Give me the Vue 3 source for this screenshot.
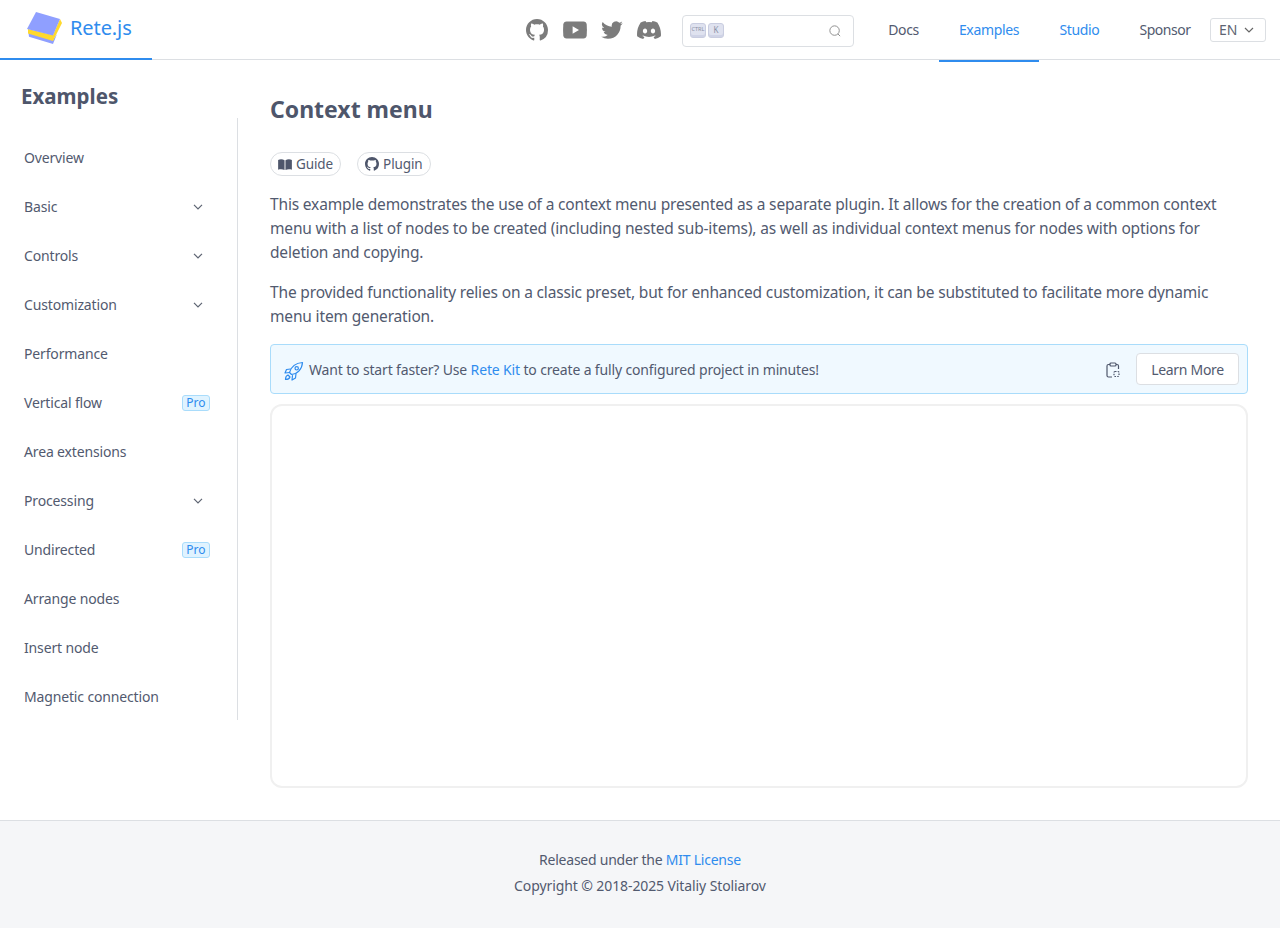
<script setup>
const menu = [
  { label: 'Overview' },
  { label: 'Basic', caret: true },
  { label: 'Controls', caret: true },
  { label: 'Customization', caret: true },
  { label: 'Performance' },
  { label: 'Vertical flow', pro: true },
  { label: 'Area extensions' },
  { label: 'Processing', caret: true },
  { label: 'Undirected', pro: true },
  { label: 'Arrange nodes' },
  { label: 'Insert node' },
  { label: 'Magnetic connection' }
]
</script>

<template>
  <div class="page">
    <header class="topbar">
      <a class="brand">
        <svg class="logo" width="36" height="35" viewBox="0 0 36 35">
          <path d="M1.500 23 L26 30 L30 24 L26 34 L2 26.800 Z" fill="#8f9fff" />
          <path d="M1 19 L26 25 L33 9 L35 13 L26 31 L1 23.500 Z" fill="#ffd92c" />
          <path d="M9 2 L33 9 L26 25.500 L0 19 Z" fill="#8f9fff" />
        </svg>
        <span class="brand-name">Rete.js</span>
      </a>
      <div class="top-right">
        <div class="socials">
          <svg class="gh" width="22" height="22" viewBox="0 0 16 16" fill="#7c7c7c"><path d="M8 0C3.58 0 0 3.58 0 8c0 3.54 2.29 6.53 5.47 7.59.4.07.55-.17.55-.38 0-.19-.01-.82-.01-1.49-2.01.37-2.53-.49-2.69-.94-.09-.23-.48-.94-.82-1.13-.28-.15-.68-.52-.01-.53.63-.01 1.08.58 1.23.82.72 1.21 1.87.87 2.33.66.07-.52.28-.87.51-1.07-1.78-.2-3.64-.89-3.64-3.95 0-.87.31-1.59.82-2.15-.08-.2-.36-1.02.08-2.12 0 0 .67-.21 2.2.82.64-.18 1.32-.27 2-.27s1.36.09 2 .27c1.53-1.04 2.2-.82 2.2-.82.44 1.1.16 1.92.08 2.12.51.56.82 1.27.82 2.15 0 3.07-1.87 3.75-3.65 3.95.29.25.54.73.54 1.48 0 1.07-.01 1.93-.01 2.2 0 .21.15.46.55.38A8.01 8.01 0 0 0 16 8c0-4.42-3.58-8-8-8z"/></svg>
          <svg width="24" height="18" viewBox="0 0 24 18"><path d="M3.500 0.500h17c1.700 0 3 1.300 3.200 3 .3 3.600.3 7.400 0 11-.2 1.700-1.500 3-3.200 3h-17c-1.700 0-3-1.300-3.200-3-.3-3.600-.3-7.400 0-11 .2-1.700 1.500-3 3.200-3z" fill="#7c7c7c"/><path d="M9.600 5.300 16 9l-6.400 3.700z" fill="#fff"/></svg>
          <svg width="22" height="18" viewBox="0 0 24 20" fill="#7c7c7c"><path d="M23.950 2.570a10 10 0 0 1-2.820.77A4.960 4.960 0 0 0 23.300.63a9.900 9.900 0 0 1-3.130 1.190 4.920 4.920 0 0 0-8.380 4.480A13.980 13.980 0 0 1 1.640 1.160a4.930 4.930 0 0 0 1.520 6.570 4.900 4.900 0 0 1-2.230-.62v.06a4.920 4.920 0 0 0 3.950 4.830 4.900 4.900 0 0 1-2.210.08 4.940 4.940 0 0 0 4.600 3.420A9.870 9.870 0 0 1 0 17.540 13.940 13.940 0 0 0 7.550 19.750c9.050 0 14-7.500 14-13.980 0-.21 0-.42-.02-.63a10 10 0 0 0 2.420-2.570z"/></svg>
          <svg width="24" height="18" viewBox="0 0 24 18" fill="#7c7c7c"><path d="M20.320 1.500A19.800 19.800 0 0 0 15.400 0c-.2.38-.45.88-.62 1.280a18.400 18.400 0 0 0-5.550 0C9.050.88 8.800.38 8.600 0a19.700 19.700 0 0 0-4.930 1.500C.55 6.170-.3 10.720.12 15.200A19.900 19.900 0 0 0 6.180 18c.49-.66.92-1.360 1.300-2.100-.71-.27-1.400-.6-2.040-1 .17-.12.34-.25.5-.39a14.200 14.200 0 0 0 12.120 0c.16.14.33.27.5.39-.65.4-1.330.73-2.050 1 .38.74.81 1.440 1.300 2.100a19.800 19.800 0 0 0 6.070-2.800c.5-5.200-.85-9.700-3.560-13.700zM8.020 12.440c-1.180 0-2.160-1.080-2.160-2.420s.96-2.420 2.160-2.420 2.180 1.090 2.160 2.420c0 1.340-.96 2.420-2.160 2.420zm7.960 0c-1.180 0-2.160-1.080-2.160-2.420s.96-2.420 2.160-2.420 2.180 1.090 2.160 2.420c0 1.340-.95 2.420-2.160 2.420z"/></svg>
        </div>
        <div class="search">
          <span class="key"><span class="key-ctrl">CTRL</span></span>
          <span class="key"><span class="key-k">K</span></span>
          <svg class="search-icon" width="12" height="12" viewBox="0 0 14 14" fill="none" stroke="#8a8a8a" stroke-width="1.100"><circle cx="6.500" cy="6.500" r="5.500"/><path d="M10.400 10.400 13 13"/></svg>
        </div>
        <nav class="nav">
          <a class="nav-item docs">Docs</a>
          <a class="nav-item active">Examples</a>
          <a class="nav-item blue">Studio</a>
          <a class="nav-item sponsor">Sponsor</a>
        </nav>
        <div class="lang">
          <span>EN</span>
          <svg width="10" height="6" viewBox="0 0 10 6" fill="none" stroke="#666" stroke-width="1.200"><path d="M1 1l4 4 4-4"/></svg>
        </div>
      </div>
    </header>

    <div class="body">
      <aside class="sidebar">
        <h2 class="side-title">Examples</h2>
        <ul class="menu">
          <li v-for="item in menu" :key="item.label" class="menu-item">
            <span>{{ item.label }}</span>
            <svg v-if="item.caret" class="caret" width="10" height="6" viewBox="0 0 10 6" fill="none" stroke="#5d6472" stroke-width="1.200"><path d="M1 .8l4 4 4-4"/></svg>
            <span v-if="item.pro" class="pro">Pro</span>
          </li>
        </ul>
      </aside>

      <main class="content">
        <h1 class="title">Context menu</h1>
        <div class="pills">
          <a class="pill">
            <svg width="14" height="11" viewBox="0 0 15 12" fill="#4e566b"><path d="M0 1c2-.9 5-.9 7 .3V12c-2-1-5-1-7-.3zM8 1.300c2-1.200 5-1.200 7-.3v10.700c-2-.7-5-.7-7 .3z"/></svg>
            Guide
          </a>
          <a class="pill">
            <svg width="14" height="14" viewBox="0 0 16 16" fill="#4e566b"><path d="M8 0C3.58 0 0 3.58 0 8c0 3.54 2.29 6.53 5.47 7.59.4.07.55-.17.55-.38 0-.19-.01-.82-.01-1.49-2.01.37-2.53-.49-2.69-.94-.09-.23-.48-.94-.82-1.13-.28-.15-.68-.52-.01-.53.63-.01 1.08.58 1.23.82.72 1.21 1.87.87 2.33.66.07-.52.28-.87.51-1.07-1.78-.2-3.64-.89-3.64-3.95 0-.87.31-1.59.82-2.15-.08-.2-.36-1.02.08-2.12 0 0 .67-.21 2.2.82.64-.18 1.32-.27 2-.27s1.36.09 2 .27c1.53-1.04 2.2-.82 2.2-.82.44 1.1.16 1.92.08 2.12.51.56.82 1.27.82 2.15 0 3.07-1.87 3.75-3.65 3.95.29.25.54.73.54 1.48 0 1.07-.01 1.93-.01 2.2 0 .21.15.46.55.38A8.01 8.01 0 0 0 16 8c0-4.42-3.58-8-8-8z"/></svg>
            Plugin
          </a>
        </div>
        <p class="para">This example demonstrates the use of a context menu presented as a separate plugin. It allows for the creation of a common context<br>menu with a list of nodes to be created (including nested sub-items), as well as individual context menus for nodes with options for<br>deletion and copying.</p>
        <p class="para">The provided functionality relies on a classic preset, but for enhanced customization, it can be substituted to facilitate more dynamic<br>menu item generation.</p>
        <div class="alert">
          <svg class="rocket" width="20" height="20" viewBox="0 0 20 20" fill="none" stroke="#2f8cee" stroke-width="1.200" stroke-linejoin="round" stroke-linecap="round"><path d="M7.500 13.500 5.500 11.500C7 6.500 11.500 2 18.500 1.500 18 8.500 13.500 13 7.500 13.500z"/><circle cx="12.700" cy="7.300" r="1.700"/><path d="M6.500 8 2.500 8.500 1 12l4.500-.5M12 12.500l-.5 4.500-3.500 2 .5-4.500M4 14c-1.500.5-2.500 2.500-2.500 4.500 2 0 4-1 4.500-2.500z"/></svg>
          <span class="alert-text">Want to start faster? Use <a class="link">Rete Kit</a> to create a fully configured project in minutes!</span>
          <svg class="clip" width="14" height="16" viewBox="0 0 14 16" fill="none" stroke="#4e566b" stroke-width="1.200"><path d="M4 2.500H2.500Q1 2.500 1 4v9.500Q1 15 2.500 15H6M10 2.500h1Q12.500 2.500 12.500 4v3"/><rect x="4" y="1" width="6" height="3" rx="1"/><rect x="8" y="9.500" width="5" height="5" rx="1" stroke-dasharray="1.500 1.200"/></svg>
          <a class="learn">Learn More</a>
        </div>
        <div class="canvas"></div>
      </main>
    </div>

    <footer class="footer">
      <div class="released">Released under the <a class="link">MIT License</a></div>
      <div>Copyright © 2018-2025 Vitaliy Stoliarov</div>
    </footer>
  </div>
</template>

<style scoped>
.page {
  min-height: 928px;
  display: flex;
  flex-direction: column;
  font-family: "Noto Sans", "Open Sans", sans-serif;
  color: #525a6f;
  font-size: 14px;
  background: #fff;
}
.topbar {
  height: 60px;
  box-sizing: border-box;
  border-bottom: 1px solid #dcdfe3;
  display: flex;
  justify-content: space-between;
  align-items: stretch;
  padding-right: 14px;
}
.brand {
  width: 152px;
  height: 60px;
  box-sizing: border-box;
  border-bottom: 2px solid #2f8cee;
  display: flex;
  align-items: center;
  padding-left: 27px;
  gap: 7px;
}
.logo { margin-top: -3px; }
.brand-name {
  color: #2f8cee;
  font-size: 20px;
  margin-top: -4px;
  letter-spacing: -0.1px;
}
.top-right {
  display: flex;
  align-items: center;
}
.socials {
  display: flex;
  align-items: center;
  gap: 14px;
  margin-right: 21px;
}
.gh { margin-right: 1px; margin-top: 1px; }
.search {
  width: 172px;
  height: 32px;
  margin-top: 2px;
  box-sizing: border-box;
  border: 1px solid #dcdfe3;
  border-radius: 4px;
  display: flex;
  align-items: center;
  padding: 0 12px 0 7px;
  gap: 2px;
  margin-right: 14px;
}
.key {
  width: 16px;
  height: 15px;
  box-sizing: border-box;
  border-radius: 3px;
  background: #dfe2ef;
  border: 1px solid #c9cde0;
  box-shadow: inset 0 -2px 0 #cfd3e6;
  display: flex;
  justify-content: center;
  color: #8a90a6;
  line-height: 11px;
}
.key-ctrl { font-size: 5.5px; }
.key-k { font-size: 8px; }
.search-icon { margin-left: auto; }
.nav {
  display: flex;
  align-self: stretch;
}
.nav-item {
  height: 62px;
  box-sizing: border-box;
  width: 100px;
  padding: 0 0 2px;
  display: flex;
  align-items: center;
  justify-content: center;
  border-bottom: 2px solid transparent;
  font-size: 14px;
  letter-spacing: -0.35px;
  color: #525a6f;
}
.nav-item.docs { width: 71px; }
.nav-item.blue { width: 81px; color: #2f8cee; }
.nav-item.sponsor { width: 90px; letter-spacing: -0.5px; }
.nav-item.active {
  color: #2f8cee;
  border-bottom-color: #2f8cee;
}
.lang {
  width: 56px;
  height: 24px;
  box-sizing: border-box;
  border: 1px solid #dcdfe3;
  border-radius: 3px;
  display: flex;
  align-items: center;
  padding-left: 8px;
  gap: 7px;
  font-size: 14px;
  color: #5d6472;
}
.body {
  flex: 1;
  display: flex;
}
.sidebar {
  width: 238px;
  flex: none;
}
.side-title {
  margin: 0;
  padding: 20px 0 0 21px;
  height: 58px;
  box-sizing: border-box;
  font-size: 20.5px;
  line-height: 32px;
  font-weight: 700;
  color: #4e566b;
}
.menu {
  list-style: none;
  margin: 0;
  padding: 15px 0 0;
  border-right: 1px solid #dcdfe3;
  height: 602px;
  box-sizing: border-box;
}
.menu-item {
  height: 49px;
  box-sizing: border-box;
  padding: 0 27px 0 24px;
  display: flex;
  align-items: center;
  justify-content: space-between;
  font-size: 14px;
  letter-spacing: -0.15px;
  color: #525a6f;
}
.caret { margin-right: 7px; }
.pro {
  font-size: 12px;
  line-height: 14px;
  letter-spacing: 0;
  color: #2f8cee;
  background: #e0f3ff;
  border: 1px solid #a9dcfb;
  border-radius: 3px;
  padding: 0 3.5px;
  height: 16px;
  box-sizing: border-box;
  display: flex;
  align-items: center;
}
.content {
  flex: 1;
  min-width: 0;
  padding: 0 32px 32px;
}
.title {
  margin: 0;
  padding-top: 33px;
  height: 92px;
  box-sizing: border-box;
  font-size: 23px;
  line-height: 32px;
  font-weight: 700;
  color: #4e566b;
}
.pills {
  display: flex;
  gap: 16px;
  height: 24px;
  margin-bottom: 16px;
}
.pill {
  height: 24px;
  box-sizing: border-box;
  border: 1px solid #dcdfe3;
  border-radius: 12px;
  padding: 0 7px;
  display: flex;
  align-items: center;
  gap: 4px;
  font-size: 13.5px;
  letter-spacing: -0.1px;
  color: #525a6f;
}
.para {
  margin: 0 0 16px;
  font-size: 15.5px;
  line-height: 24px;
  letter-spacing: -0.16px;
  color: #525a6f;
}
.alert {
  height: 50px;
  box-sizing: border-box;
  border: 1px solid #a9dcfb;
  border-radius: 4px;
  background: #f0f9ff;
  display: flex;
  align-items: center;
  padding: 0 8px 0 13px;
  font-size: 14px;
}
.rocket { margin-right: 5px; margin-top: 3px; }
.alert-text { flex: 1; letter-spacing: -0.15px; }
.link { color: #2f8cee; }
.clip { margin-right: 16px; margin-top: 2px; }
.learn {
  width: 103px;
  height: 32px;
  box-sizing: border-box;
  border: 1px solid #dcdfe3;
  border-radius: 4px;
  background: #fff;
  display: flex;
  align-items: center;
  justify-content: center;
  letter-spacing: -0.3px;
  color: #525a6f;
}
.canvas {
  margin-top: 10px;
  height: 384px;
  box-sizing: border-box;
  border: 2px solid #f0f0f0;
  border-radius: 12px;
}
.footer {
  height: 108px;
  box-sizing: border-box;
  background: #f5f6f8;
  border-top: 1px solid #dcdfe3;
  padding-top: 26px;
  text-align: center;
  line-height: 26px;
  font-size: 14px;
  letter-spacing: -0.1px;
}
.released { letter-spacing: -0.24px; }
</style>
